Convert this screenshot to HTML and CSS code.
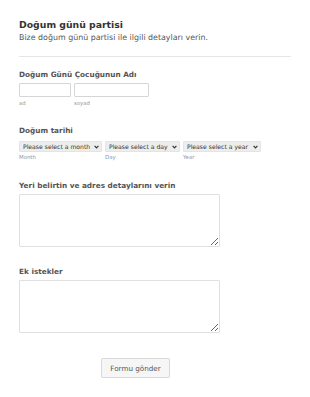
FILE: index.html
```html
<!DOCTYPE html>
<html>
    <head>
        <meta charset="UTF-8">
        <title>Doğum günü partisi</title>
        <link rel="stylesheet" href="styles.css">
    </head>
    <body>
        <form class="form">
            <div class="header">
                <h1 class="title">Doğum günü partisi</h1>
                <p class="subtitle">Bize doğum günü partisi ile ilgili detayları verin.</p>
            </div>

            <div class="field">
                <label class="label">Doğum Günü Çocuğunun Adı</label>
                <div class="row">
                    <div class="part">
                        <input type="text" class="input first">
                        <span class="sub">ad</span>
                    </div>
                    <div class="part">
                        <input type="text" class="input last">
                        <span class="sub">soyad</span>
                    </div>
                </div>
            </div>

            <div class="field date">
                <label class="label">Doğum tarihi</label>
                <div class="row">
                    <div class="part">
                        <div class="select month">
                            <select><option>Please select a month</option></select>
                            <svg class="arrow" width="5" height="4" viewBox="0 0 5 4"><polyline points="0.6,0.8 2.5,2.8 4.4,0.8" fill="none" stroke="#333" stroke-width="1.2"/></svg>
                        </div>
                        <span class="sub blue">Month</span>
                    </div>
                    <div class="part">
                        <div class="select day">
                            <select><option>Please select a day</option></select>
                            <svg class="arrow" width="5" height="4" viewBox="0 0 5 4"><polyline points="0.6,0.8 2.5,2.8 4.4,0.8" fill="none" stroke="#333" stroke-width="1.2"/></svg>
                        </div>
                        <span class="sub blue">Day</span>
                    </div>
                    <div class="part">
                        <div class="select year">
                            <select><option>Please select a year</option></select>
                            <svg class="arrow" width="5" height="4" viewBox="0 0 5 4"><polyline points="0.6,0.8 2.5,2.8 4.4,0.8" fill="none" stroke="#333" stroke-width="1.2"/></svg>
                        </div>
                        <span class="sub blue">Year</span>
                    </div>
                </div>
            </div>

            <div class="field place">
                <label class="label">Yeri belirtin ve adres detaylarını verin</label>
                <textarea class="area"></textarea>
            </div>

            <div class="field extra">
                <label class="label">Ek istekler</label>
                <textarea class="area"></textarea>
            </div>

            <div class="actions">
                <button type="button" class="submit">Formu gönder</button>
            </div>
        </form>
    </body>
</html>
```

FILE: styles.css
```css
body {
    margin: 0;
    background: #fff;
    font-family: "DejaVu Sans", Verdana, sans-serif;
    color: #333;
}

.form {
    padding: 19px 19px 0 19px;
    width: 272px;
}

.header {
    border-bottom: 1px solid #e6e6e6;
    padding-bottom: 14px;
}

.title {
    margin: 0;
    font-size: 9.3px;
    line-height: 11px;
    font-weight: bold;
    color: #333;
}

.subtitle {
    margin: 3px 0 0 0;
    font-size: 7.9px;
    line-height: 9px;
    color: #555;
}

.field {
    margin-top: 13px;
}

.label {
    display: block;
    font-size: 7.3px;
    line-height: 10px;
    font-weight: bold;
    color: #555;
    margin-bottom: 3px;
}

.row {
    display: flex;
    gap: 3px;
}

.part {
    display: flex;
    flex-direction: column;
}

.input {
    box-sizing: border-box;
    height: 14px;
    margin: 0;
    padding: 0 2px;
    border: 1px solid #d6d6d6;
    border-radius: 1px;
    background: #fff;
}

.input.first {
    width: 52px;
}

.input.last {
    width: 75px;
}

.sub {
    font-size: 5.4px;
    line-height: 6px;
    margin-top: 3px;
    color: #999;
}

.sub.blue {
    color: #8d97ad;
    margin-top: 2px;
}

.date {
    margin-top: 20px;
}

.date .label {
    margin-bottom: 5px;
}

.select {
    position: relative;
    display: block;
    height: 11px;
}

.select select {
    display: block;
    -webkit-appearance: none;
    appearance: none;
    box-sizing: border-box;
    height: 11px;
    margin: 0;
    padding: 0 8px 0 3px;
    border: 1px solid #e4e4e4;
    border-radius: 1px;
    background: #ededed;
    font-family: "DejaVu Sans", Verdana, sans-serif;
    font-size: 6.1px;
    line-height: 9px;
    color: #333;
}

.month select {
    width: 83px;
}

.day select {
    width: 75px;
}

.year select {
    width: 78px;
}

.arrow {
    position: absolute;
    right: 3px;
    top: 3.5px;
}

.place {
    margin-top: 21px;
}

.area {
    display: block;
    box-sizing: border-box;
    width: 201px;
    height: 53px;
    margin: 0;
    border: 1px solid #e0e0e0;
    border-radius: 1px;
}

.extra {
    margin-top: 20px;
}

.actions {
    display: flex;
    margin-top: 25px;
    padding-left: 82px;
}

.submit {
    box-sizing: border-box;
    width: 69px;
    height: 20px;
    margin: 0;
    border: 1px solid #d9d9d9;
    border-radius: 2px;
    background: #f6f6f6;
    font-family: "DejaVu Sans", Verdana, sans-serif;
    font-size: 7.2px;
    color: #555;
    box-shadow: 0 1px 1px rgba(0,0,0,.05);
}
```
